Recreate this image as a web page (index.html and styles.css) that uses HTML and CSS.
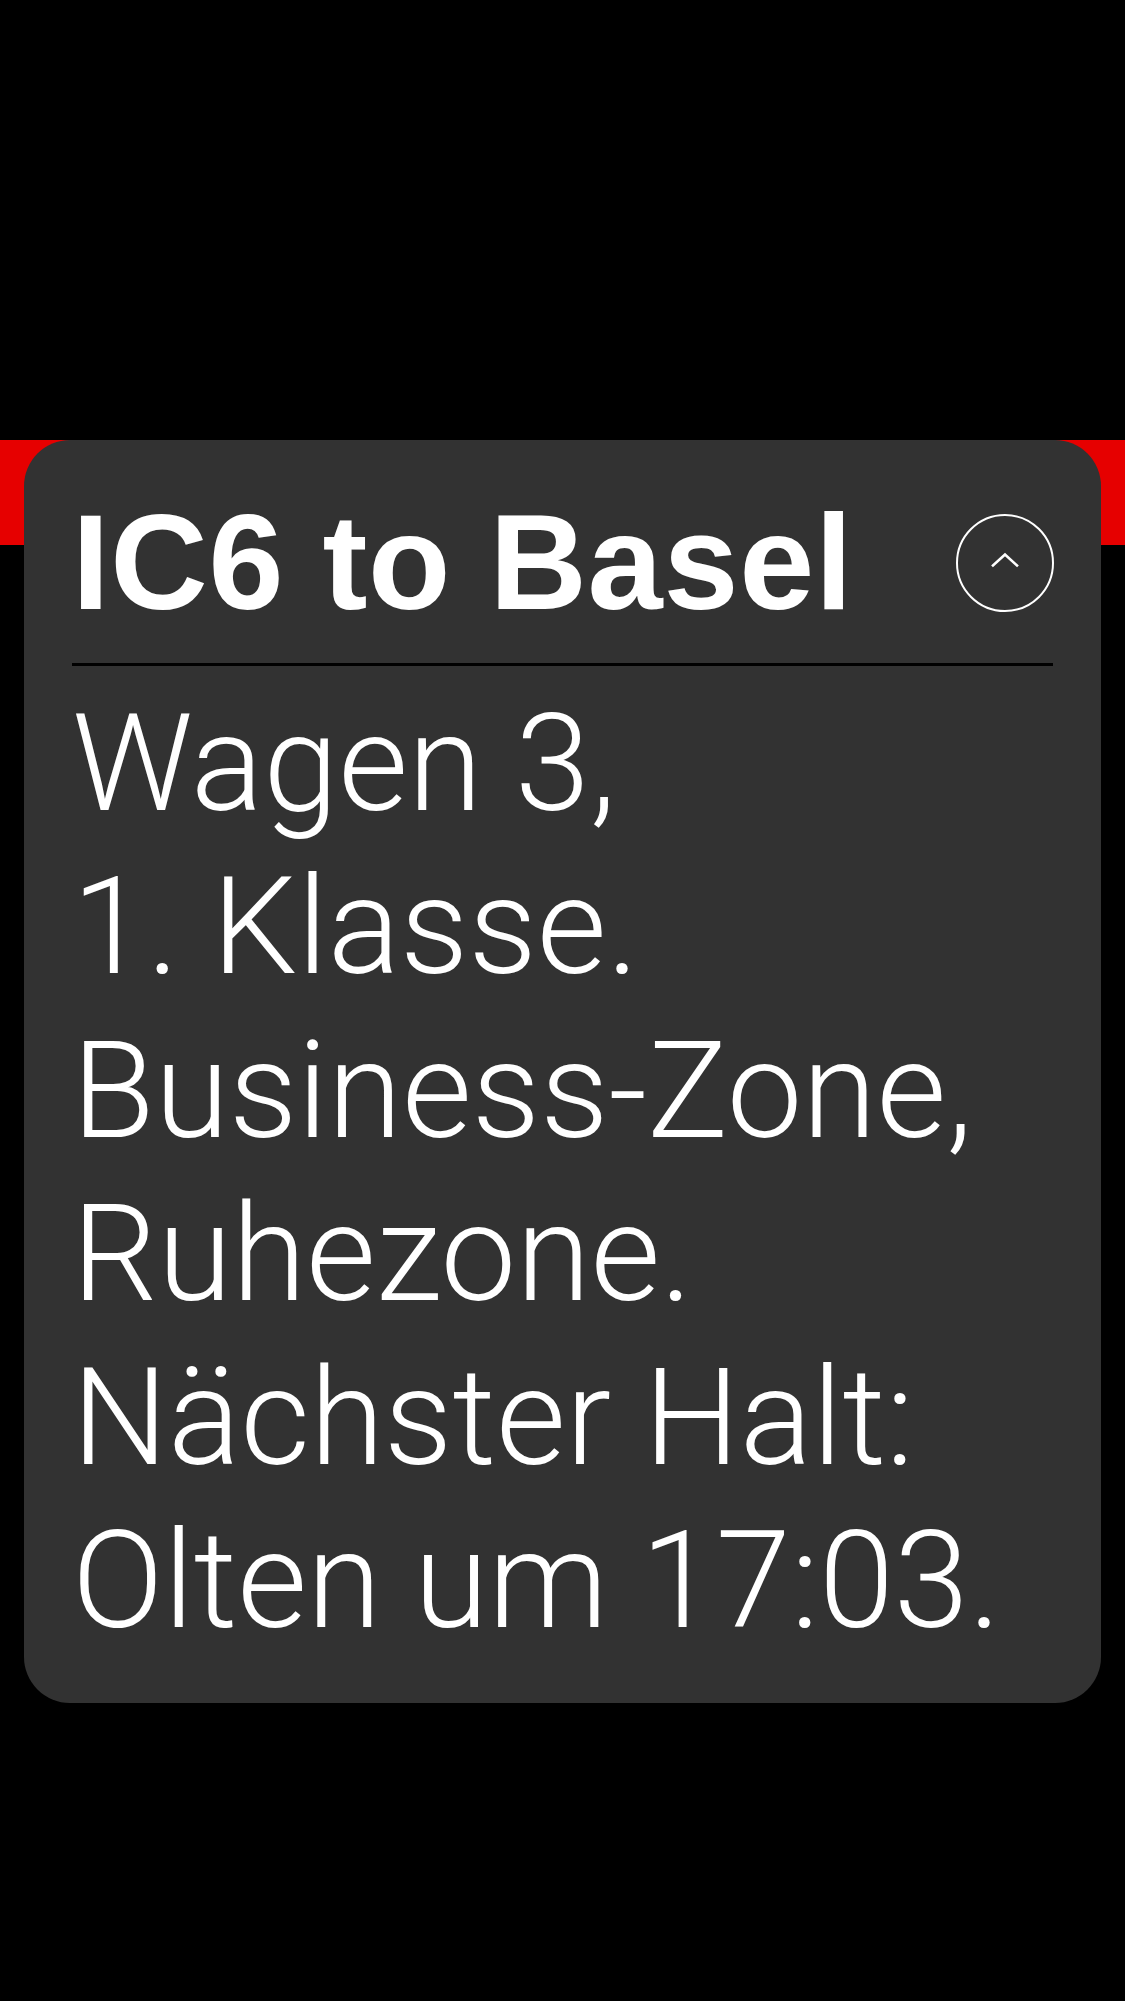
FILE: index.html
```html
<!DOCTYPE html>
<html lang="de">
<head>
<meta charset="utf-8">
<title>IC6 to Basel</title>
<link rel="stylesheet" href="styles.css">
</head>
<body>
<div class="top-space"></div>
<div class="stage">
  <section class="card">
    <header class="card-head">
      <h1 class="title">IC6 to Basel</h1>
      <button class="toggle" aria-label="Einklappen">
        <svg class="chev" viewBox="0 0 30 16" width="30" height="16" aria-hidden="true">
          <polyline points="3,13.5 15,2.5 27,13.5" fill="none" stroke="#fff" stroke-width="2.6" stroke-linecap="square"/>
        </svg>
      </button>
    </header>
    <div class="divider"></div>
    <p class="info">
      <span class="line">Wagen 3,</span>
      <span class="line">1. Klasse.</span>
      <span class="line">Business-Zone,</span>
      <span class="line">Ruhezone.</span>
      <span class="line">Nächster Halt:</span>
      <span class="line">Olten um 17:03.</span>
    </p>
  </section>
</div>
</body>
</html>
```

FILE: styles.css
```css
html, body {
  margin: 0;
  padding: 0;
  background: #000;
}
body {
  width: 1125px;
  height: 2001px;
  overflow: hidden;
  color: #fff;
}
.top-space {
  height: 440px;
}
.stage {
  background: linear-gradient(to bottom, #e60000 0, #e60000 105px, #000 105px);
  padding: 0 24px;
}
.card {
  background: #323232;
  border-radius: 46px;
  padding: 42px 48px 40px 48px;
}
.card-head {
  display: flex;
  align-items: center;
  justify-content: space-between;
}
.title {
  margin: 0;
  font-family: "Liberation Sans", Arial, sans-serif;
  font-weight: 700;
  font-size: 135px;
  line-height: 162px;
  letter-spacing: 0.7px;
}
.toggle {
  width: 98px;
  height: 98px;
  border-radius: 50%;
  border: 2.8px solid #fff;
  background: transparent;
  padding: 0;
  margin: 0 -1px 0 0;
  display: flex;
  align-items: center;
  justify-content: center;
}
.chev {
  display: block;
  margin-top: -6px;
}
.divider {
  height: 3px;
  background: #000;
  margin-top: 19px;
}
.info {
  margin: 17px 0 0 0;
  font-family: Roboto, "Liberation Sans", sans-serif;
  font-weight: 300;
  font-size: 135px;
  line-height: 163.4px;
}
.line {
  display: block;
  white-space: nowrap;
}
```
